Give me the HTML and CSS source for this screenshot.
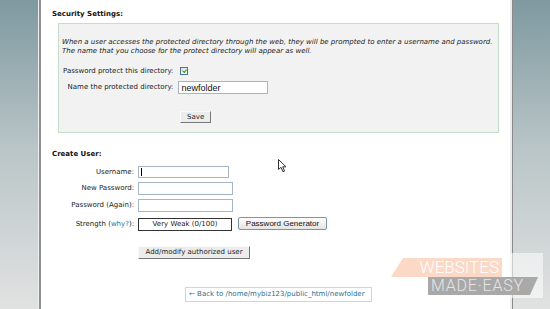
FILE: index.html
```html
<!DOCTYPE html>
<html>

<head>
  <title>Password Protect Directories</title>
  <link rel="stylesheet" href="styles.css">
</head>

<body>
  <div class="page">
    <div class="side side-left"></div>

    <main class="main">
      <h2 class="title">Security Settings:</h2>
      <form class="settings">
        <p class="note">When a user accesses the protected directory through the web, they will be prompted to enter a username and password.<br>The name that you choose for the protect directory will appear as well.</p>
        <div class="form-grid security-grid">
          <label class="label">Password protect this directory:</label>
          <span class="field"><span class="check"></span></span>
          <label class="label">Name the protected directory:</label>
          <span class="field"><input class="text-input dir-input" value="newfolder"></span>
        </div>
        <div class="save-row">
          <button type="button" class="btn">Save</button>
        </div>
      </form>

      <h2 class="title create-title">Create User:</h2>
      <div class="form-grid user-grid">
        <label class="label">Username:</label>
        <span class="field"><span class="caret-wrap"><input class="text-input user-input"></span></span>
        <label class="label">New Password:</label>
        <span class="field"><input class="text-input pass-input" type="password"></span>
        <label class="label">Password (Again):</label>
        <span class="field"><input class="text-input pass-input" type="password"></span>
        <label class="label strength-label">Strength (<a href="#" class="link">why?</a>):</label>
        <span class="field strength-field">
          <span class="strength">Very Weak (0/100)</span>
          <button type="button" class="gen-btn">Password Generator</button>
        </span>
      </div>
      <div class="add-row">
        <button type="button" class="btn">Add/modify authorized user</button>
      </div>

      <div class="back-row">
        <a href="#" class="back-link">&larr; Back to /home/mybiz123/public_html/newfolder</a>
      </div>
    </main>

    <div class="side side-right"></div>
  </div>

  <svg class="cursor" width="10" height="14" viewBox="0 0 10 14">
    <path d="M0.5 0.5 L0.5 10.5 L3 8.3 L5 12.8 L6.6 12.1 L4.7 7.8 L8 7.8 Z" fill="#fff" stroke="#333" stroke-width="1" stroke-linejoin="round" />
  </svg>

  <div class="watermark">
    <div class="wm-fade"></div>
    <div class="wm-top">WEBSITES</div>
    <div class="wm-bottom">MADE&middot;EASY</div>
  </div>
</body>

</html>
```

FILE: styles.css
```css
html,
body {
  margin: 0;
  height: 100%;
  overflow: hidden;
}

body {
  font: 7px/9px "DejaVu Sans", Verdana, sans-serif;
  color: #1a1a1a;
  background: #fff;
}

.page {
  display: flex;
  height: 309px;
}

.side {
  width: 37px;
  flex: none;
  background: linear-gradient(#7e99a0, #b9c5c7 48%, #e1e2e2);
}

.side-left {
  width: 38px;
  border-right: 1px solid #eeeeee;
}

.side-right {
  border-left: 1px solid #8a8a8a;
}

.main {
  flex: 1;
  border-left: 2px solid #8f8f8f;
  border-right: 2px solid #ececec;
  padding: 10px 11px 0 11px;
}

.title {
  margin: 0;
  font-size: 7px;
  line-height: 9px;
  font-weight: bold;
  color: #111;
}

.settings {
  margin: 4px 0 0 6px;
  height: 110px;
  box-sizing: border-box;
  border: 1px solid #c7ddc9;
  background: #f2f2f2;
  padding: 14px 3px 0 3px;
}

.note {
  margin: 0;
  font-style: italic;
  color: #222;
}

.form-grid {
  display: grid;
  align-items: center;
}

.label {
  text-align: right;
  white-space: nowrap;
}

.field {
  display: flex;
  align-items: center;
}

.security-grid {
  grid-template-columns: auto 1fr;
  grid-template-rows: 14px 13px;
  row-gap: 3px;
  column-gap: 5px;
  margin-top: 8px;
  padding-left: 1px;
}

.check {
  width: 8px;
  height: 8px;
  margin-left: 2px;
  box-sizing: border-box;
  border: 1px solid #4f7396;
  background: linear-gradient(135deg, #dfe3e8, #fff);
  position: relative;
}

.check::after {
  content: "";
  position: absolute;
  left: 1px;
  top: 0;
  width: 2px;
  height: 3px;
  border: solid #21a121;
  border-width: 0 1.5px 1.5px 0;
  transform: translate(1px, 0.5px) rotate(40deg);
}

.text-input {
  box-sizing: border-box;
  margin: 0;
  border: 1px solid #a3b5c7;
  background: #fff;
  padding: 0 2px;
  font: 9px "Liberation Sans", Arial, sans-serif;
  color: #111;
  outline: none;
}

.dir-input {
  width: 90px;
  height: 13px;
}

.save-row {
  margin-top: 17px;
  padding-left: 118px;
}

.btn {
  display: block;
  margin: 0;
  height: 12px;
  padding: 0 6px;
  font: 7px/10px "DejaVu Sans", Verdana, sans-serif;
  color: #222;
  background: #ececec;
  border: 1px solid;
  border-color: #fafafa #777 #777 #fafafa;
}

.create-title {
  margin-top: 17px;
}

.user-grid {
  grid-template-columns: 82px 1fr;
  grid-template-rows: 12px 13px 13px 13px;
  column-gap: 4px;
  row-gap: 4px;
  margin-top: 7px;
}

.strength-label,
.strength-field {
  margin-top: 3px;
}

.user-input {
  width: 91px;
  height: 12px;
}

.pass-input {
  width: 95px;
  height: 13px;
}

.caret-wrap {
  position: relative;
  display: flex;
}

.caret-wrap::after {
  content: "";
  position: absolute;
  left: 3px;
  top: 2px;
  width: 1px;
  height: 8px;
  background: #000;
}

.link {
  color: #2a6f93;
  text-decoration: none;
}

.strength {
  width: 94px;
  height: 13px;
  box-sizing: border-box;
  border: 1px solid #333;
  background: #fff;
  text-align: center;
  line-height: 11px;
}

.gen-btn {
  margin: -1px 0 0 6px;
  width: 89px;
  height: 13px;
  padding: 0;
  font: 8px/11px "Liberation Sans", Arial, sans-serif;
  color: #111;
  border: 1px solid #7d93ab;
  border-radius: 2px;
  background: linear-gradient(#fefefe, #e4e4e2);
}

.add-row {
  margin-top: 17px;
  padding-left: 86px;
}

.add-row .btn {
  height: 13px;
  width: 112px;
  padding: 0;
  line-height: 11px;
}

.back-row {
  margin-top: 28px;
  padding-left: 133px;
}

.back-link {
  display: inline-block;
  height: 15px;
  width: 187px;
  box-sizing: border-box;
  padding-left: 3px;
  border: 1px solid #d4d4d4;
  line-height: 13px;
  color: #2a6f93;
  text-decoration: none;
  white-space: nowrap;
}

.cursor {
  position: absolute;
  left: 278px;
  top: 159px;
}

.watermark {
  position: absolute;
  left: 388px;
  top: 253px;
  width: 155px;
  height: 45px;
  font-family: Roboto, "Liberation Sans", sans-serif;
  font-weight: 300;
}

.wm-fade {
  position: absolute;
  inset: 0 0 0 60px;
  background: rgba(255, 255, 255, 0.55);
}

.wm-top {
  position: absolute;
  left: 3px;
  top: 5px;
  width: 111px;
  height: 19px;
  background: #fbd9c6;
  clip-path: polygon(12px 0, 100% 0, 100% 100%, 0 100%);
  color: #fff;
  font-size: 17px;
  line-height: 19px;
  text-align: right;
  padding-right: 3px;
  box-sizing: border-box;
}

.wm-bottom {
  position: absolute;
  left: 40px;
  top: 24px;
  width: 110px;
  height: 18px;
  background: #a9a9a9;
  clip-path: polygon(0 0, 100% 0, calc(100% - 8px) 100%, 0 100%);
  color: #e6e6e6;
  font-size: 16px;
  line-height: 18px;
  padding-left: 3px;
  box-sizing: border-box;
  letter-spacing: 0.8px;
}
```
